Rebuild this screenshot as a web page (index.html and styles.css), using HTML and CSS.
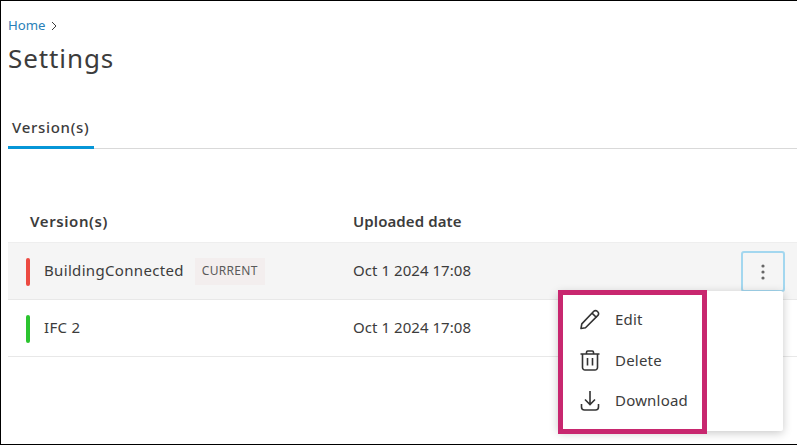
FILE: index.html
```html
<!DOCTYPE html>
<html lang="en">
<head>
<meta charset="utf-8">
<title>Settings</title>
<link rel="stylesheet" href="styles.css">
</head>
<body>
<div class="frame">
  <nav class="crumbs"><a class="crumb-link">Home</a><svg class="crumb-sep" width="6" height="10" viewBox="0 0 6 10"><path d="M1 1l4 4-4 4" fill="none" stroke="#3c3c3c" stroke-width="1"/></svg></nav>
  <h1 class="title">Settings</h1>
  <div class="tabs"><div class="tab">Version(s)</div></div>
  <div class="table">
    <div class="row head"><div class="col-name">Version(s)</div><div class="col-date">Uploaded date</div></div>
    <div class="row item selected">
      <div class="col-name"><span class="mark red"></span><span class="name">BuildingConnected</span><span class="tag">CURRENT</span></div>
      <div class="col-date">Oct 1 2024 17:08</div>
      <button class="more" aria-label="More"><svg width="4" height="16" viewBox="0 0 4 16"><circle cx="2" cy="2" r="1.6"/><circle cx="2" cy="8" r="1.6"/><circle cx="2" cy="14" r="1.6"/></svg></button>
    </div>
    <div class="row item">
      <div class="col-name"><span class="mark green"></span><span class="name">IFC 2</span></div>
      <div class="col-date">Oct 1 2024 17:08</div>
    </div>
  </div>
  <div class="menu">
    <div class="menu-item"><svg width="22" height="22" viewBox="0 0 22 22" fill="none" stroke="#333" stroke-width="1.6"><path d="M2 20.500l.8-4.600L14.800 3.300a2.400 2.400 0 0 1 3.400 0l.7.7a2.400 2.400 0 0 1 0 3.400L6.500 19.700z" stroke-linejoin="round"/><path d="M13 5.200l4.500 4.300"/></svg><span>Edit</span></div>
    <div class="menu-item"><svg width="22" height="22" viewBox="0 0 22 22" fill="none" stroke="#333" stroke-width="1.6"><path d="M1.500 5h19M7.500 5V3.200A1.200 1.200 0 0 1 8.700 2h4.600a1.200 1.200 0 0 1 1.200 1.200V5M3.500 5v13.500A2.500 2.500 0 0 0 6 21h10a2.500 2.500 0 0 0 2.500-2.500V5M8.500 9v7.500M13.500 9v7.500"/></svg><span>Delete</span></div>
    <div class="menu-item"><svg width="22" height="22" viewBox="0 0 22 22" fill="none" stroke="#333" stroke-width="1.6"><path d="M11 2v13M6 10.500l5 5 5-5M2.500 15v3a3 3 0 0 0 3 3h11a3 3 0 0 0 3-3v-3"/></svg><span>Download</span></div>
  </div>
  <div class="highlight"></div>
</div>
</body>
</html>
```
FILE: styles.css
```css
* { box-sizing: border-box; }
html, body { margin: 0; padding: 0; }
body { font-family: "Noto Sans", "Open Sans", sans-serif; color: #3c3c3c; background: #fff; }
.frame { position: relative; width: 797px; height: 445px; border: 1px solid #000; border-right: 0; padding: 15px 0 0 7px; overflow: hidden; }
.crumbs { display: flex; align-items: center; gap: 5px; height: 18px; font-size: 13.200px; line-height: 18px; }
.crumb-link { color: #2a7fb8; }
.crumb-sep { margin-top: 1px; }
.title { margin: 6px 0 0; font-size: 26px; font-weight: 400; line-height: 36px; letter-spacing: 0.9px; }
.tabs { margin-top: 38px; height: 35px; border-bottom: 1px solid #d9d9d9; }
.tab { width: 86px; height: 35px; padding: 0 0 0 4px; border-bottom: 3px solid #0696d7; font-size: 15px; font-weight: 500; line-height: 26px; letter-spacing: 0.7px; }
.table { margin-top: 54px; }
.row { display: flex; align-items: center; position: relative; font-size: 15px; }
.head { height: 40px; font-weight: 600; border-bottom: 1px solid #eeeeee; padding-bottom: 4px; }
.head .col-name { padding-left: 22px; letter-spacing: 0.6px; }
.head .col-date { letter-spacing: 0.1px; }
.item { height: 57px; border-bottom: 1px solid #e8e8e8; }
.item .col-date { margin-bottom: 2px; letter-spacing: 0.05px; }
.selected { background: #f5f5f5; }
.col-name { width: 345px; display: flex; align-items: center; padding-left: 18px; }
.name { letter-spacing: 0.33px; margin-bottom: 2px; }
.mark { width: 4px; height: 28px; border-radius: 2px; margin: 2px 14px 0 0; }
.red { background: #ec4a41; }
.green { background: #2bc42f; }
.tag { margin: 1px 0 0 11px; padding: 0 7px; height: 27px; line-height: 25px; background: #f3eeee; font-size: 12px; letter-spacing: 0.3px; color: #5a5a5a; }
.more { position: absolute; left: 733px; top: 8px; width: 44px; height: 41px; padding: 0; display: flex; align-items: center; justify-content: center; background: #f5f5f5; border: 2px solid #a3d7ef; border-radius: 3px; }
.more svg { fill: #666; }
.menu { position: absolute; left: 557px; top: 290px; width: 225px; height: 140px; padding: 8px 0 0 21px; background: #fff; border-radius: 2px; box-shadow: 0 2px 10px rgba(0,0,0,.22); }
.menu-item { display: flex; align-items: center; gap: 14px; height: 40.500px; font-size: 15px; }
.menu-item span { letter-spacing: 0.2px; }
.highlight { position: absolute; left: 557px; top: 289px; width: 149px; height: 144px; border: 5px solid #c8276f; }
```
